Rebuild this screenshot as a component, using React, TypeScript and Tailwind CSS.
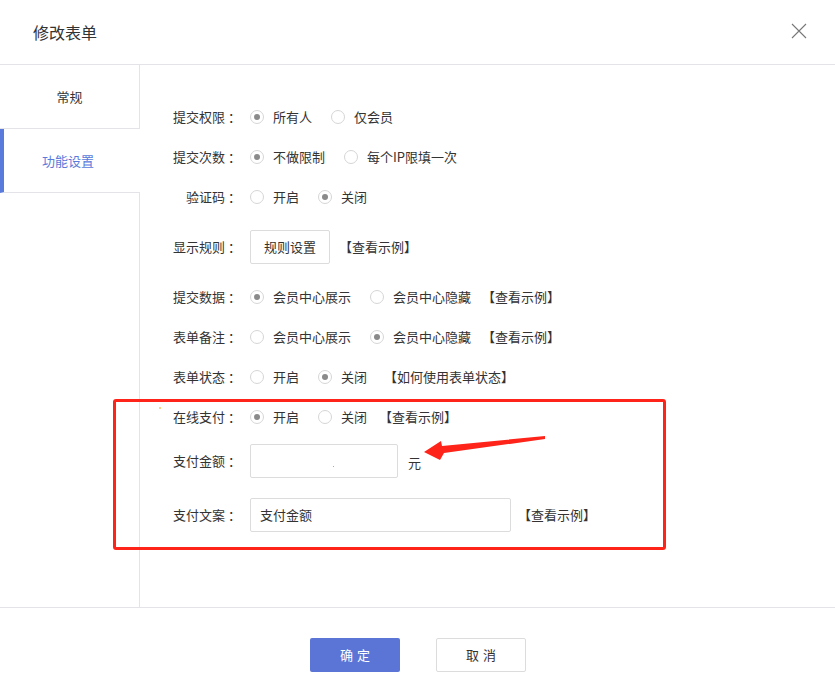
import React from "react";

const Radio = ({ checked, label }: { checked?: boolean; label: string }) => (
  <div className="flex items-center mr-[19px]">
    <span className="w-[14px] h-[14px] rounded-full border border-[#d6d6d6] bg-white flex items-center justify-center">
      {checked && <span className="w-[6px] h-[6px] rounded-full bg-[#8a8a8a]" />}
    </span>
    <span className="ml-[9px] text-[#333] whitespace-nowrap">{label}</span>
  </div>
);

const Row = ({ label, h, children }: { label: string; h: string; children?: React.ReactNode }) => (
  <div className={`flex items-center ${h}`}>
    <div className="w-[68px] text-right text-[#333] shrink-0 whitespace-nowrap">
      {label}
      <span className="ml-[3px]">：</span>
    </div>
    <div className="ml-[9px] flex items-center">{children}</div>
  </div>
);

const Link = ({ text, cls = "" }: { text: string; cls?: string }) => (
  <span className={`text-[#333] whitespace-nowrap ${cls}`}>{text}</span>
);

export default function App() {
  return (
    <div
      className="relative w-[835px] h-[698px] bg-white text-[13px] overflow-hidden"
      style={{ fontFamily: '"Noto Sans CJK SC", "Noto Sans", sans-serif' }}
    >
      {/* header */}
      <div className="h-[65px] border-b border-[#e4e4e8] flex items-center justify-between pl-[33px] pr-[28px]">
        <div className="text-[16px] text-[#333] -mt-[1px]">修改表单</div>
        <svg width="16" height="16" viewBox="0 0 16 16" className="-mt-[2px]">
          <path d="M1 1 L15 15 M15 1 L1 15" stroke="#777" strokeWidth="1.1" />
        </svg>
      </div>

      {/* body */}
      <div className="flex h-[542px]">
        <div className="w-[140px] shrink-0 flex flex-col">
          <div className="h-[64px] border-b border-r border-[#e4e4e8] flex items-center justify-center text-[#333]">
            常规
          </div>
          <div className="h-[64px] border-b border-[#e4e4e8] border-l-[4px] border-l-[#5a7bdb] flex items-center justify-center text-[#5a7bdb] pr-[8px]">
            功能设置
          </div>
          <div className="flex-1 border-r border-[#e4e4e8]" />
        </div>

        <div className="flex-1 pl-[33px] pt-[32px]">
          <Row label="提交权限" h="h-[40px]">
            <Radio checked label="所有人" />
            <Radio label="仅会员" />
          </Row>
          <Row label="提交次数" h="h-[40px]">
            <Radio checked label="不做限制" />
            <Radio label="每个IP限填一次" />
          </Row>
          <Row label="验证码" h="h-[40px]">
            <Radio label="开启" />
            <Radio checked label="关闭" />
          </Row>
          <Row label="显示规则" h="h-[60px]">
            <div className="w-[80px] h-[34px] border border-[#dcdcdc] rounded-[2px] flex items-center justify-center text-[#333]">
              规则设置
            </div>
            <Link text="【查看示例】" cls="ml-[9px]" />
          </Row>
          <Row label="提交数据" h="h-[40px]">
            <Radio checked label="会员中心展示" />
            <Radio label="会员中心隐藏" />
            <Link text="【查看示例】" cls="-ml-[8px]" />
          </Row>
          <Row label="表单备注" h="h-[40px]">
            <Radio label="会员中心展示" />
            <Radio checked label="会员中心隐藏" />
            <Link text="【查看示例】" cls="-ml-[8px]" />
          </Row>
          <Row label="表单状态" h="h-[40px]">
            <Radio label="开启" />
            <Radio checked label="关闭" />
            <Link text="【如何使用表单状态】" cls="-ml-[2px]" />
          </Row>
          <Row label="在线支付" h="h-[40px]">
            <Radio checked label="开启" />
            <Radio label="关闭" />
            <Link text="【查看示例】" cls="-ml-[7px]" />
          </Row>
          <Row label="支付金额" h="h-[48px]">
            <div className="relative w-[148px] h-[34px] border border-[#dcdcdc] rounded-[2px] bg-white">
              <span className="absolute left-[82px] top-[21px] w-[1px] h-[1px] bg-[#aaa]" />
            </div>
            <span className="ml-[10px] mt-[3px] text-[#333]">元</span>
          </Row>
          <Row label="支付文案" h="h-[60px]">
            <div className="w-[261px] h-[34px] border border-[#dcdcdc] rounded-[2px] flex items-center pl-[9px] text-[#333]">
              支付金额
            </div>
            <Link text="【查看示例】" cls="ml-[7px]" />
          </Row>
        </div>
      </div>

      {/* footer */}
      <div className="border-t border-[#e4e4e8] flex justify-center pt-[30px] gap-[36px] pl-[1px]">
        <button className="w-[90px] h-[34px] rounded-[2px] bg-[#5a75d6] text-white text-[13px] tracking-[4px] pl-[4px]">
          确定
        </button>
        <button className="w-[90px] h-[34px] rounded-[2px] border border-[#dcdcdc] bg-white text-[#333] text-[13px] tracking-[4px] pl-[4px]">
          取消
        </button>
      </div>

      {/* annotations */}
      <div className="absolute left-[113px] top-[399px] w-[553px] h-[151px] border-[3px] border-[#ff2419] rounded-[3px] pointer-events-none" />
      <span className="absolute left-[159px] top-[407px] w-[2px] h-[2px] bg-[#f5d58a]" />
      <svg className="absolute left-0 top-0 pointer-events-none" width="835" height="698">
        <polygon
          points="424,452 441,441 442,446 545,436 545,439 444,453 440,460"
          fill="#ff2419"
        />
      </svg>
    </div>
  );
}
